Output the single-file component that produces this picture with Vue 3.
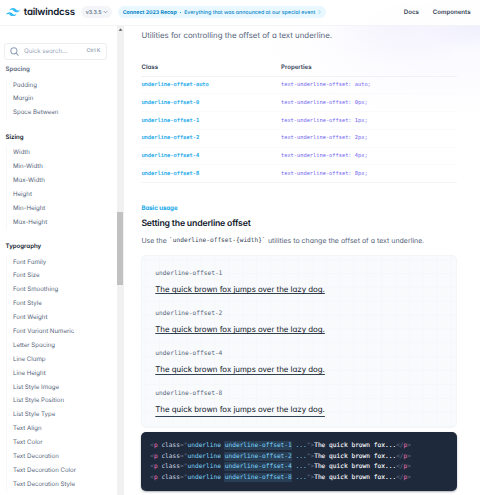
<script setup>
const groups = [
  { title: 'Spacing', soft: true, items: ['Padding', 'Margin', 'Space Between'] },
  { title: 'Sizing', items: ['Width', 'Min-Width', 'Max-Width', 'Height', 'Min-Height', 'Max-Height'] },
  {
    title: 'Typography',
    items: [
      'Font Family', 'Font Size', 'Font Smoothing', 'Font Style', 'Font Weight', 'Font Variant Numeric',
      'Letter Spacing', 'Line Clamp', 'Line Height', 'List Style Image', 'List Style Position',
      'List Style Type', 'Text Align', 'Text Color', 'Text Decoration', 'Text Decoration Color',
      'Text Decoration Style',
    ],
  },
]
const rows = [
  ['auto', 'auto'], ['0', '0px'], ['1', '1px'], ['2', '2px'], ['4', '4px'], ['8', '8px'],
]
const offsets = [1, 2, 4, 8]
</script>

<template>
  <div class="page">
    <header class="topbar">
      <svg class="mark" viewBox="0 0 54 33" aria-hidden="true">
        <path fill="#38bdf8" fill-rule="evenodd" d="M27 0c-7.2 0-11.7 3.6-13.5 10.8 2.7-3.6 5.85-4.95 9.45-4.05 2.054.513 3.522 2.004 5.147 3.653C30.744 13.09 33.808 16.2 40.5 16.2c7.2 0 11.7-3.6 13.5-10.8-2.7 3.6-5.85 4.95-9.45 4.05-2.054-.513-3.522-2.004-5.147-3.653C36.756 3.11 33.692 0 27 0zM13.5 16.2C6.3 16.2 1.8 19.8 0 27c2.7-3.6 5.85-4.95 9.45-4.05 2.054.514 3.522 2.004 5.147 3.653C17.244 29.29 20.308 32.4 27 32.4c7.2 0 11.7-3.6 13.5-10.8-2.7 3.6-5.85 4.95-9.45 4.05-2.054-.513-3.522-2.004-5.147-3.653C23.256 19.31 20.192 16.2 13.5 16.2z" />
      </svg>
      <span class="wordmark">tailwindcss</span>
      <button class="version">
        <span>v3.3.5</span>
        <svg viewBox="0 0 6 4" class="chev"><path d="M1 1l2 2 2-2" fill="none" stroke="#64748b" stroke-width=".8" /></svg>
      </button>
      <a class="banner">
        <strong>Connect 2023 Recap</strong>
        <i class="dot"></i>
        <span class="news">Everything that was announced at our special event</span>
        <svg viewBox="0 0 3 6" class="arrow"><path d="M.5 1l2 2-2 2" fill="none" stroke="#7dd3fc" stroke-width=".7" /></svg>
      </a>
      <nav class="links">
        <a class="docs">Docs</a>
        <a class="comps">Components</a>
      </nav>
    </header>

    <div class="body">
      <aside class="sidebar">
        <div class="search">
          <svg viewBox="0 0 10 10" class="lens">
            <circle cx="4.3" cy="4.3" r="3.4" fill="none" stroke="#94a3b8" stroke-width="1.2" />
            <path d="M6.8 6.8l2.4 2.4" stroke="#94a3b8" stroke-width="1.2" stroke-linecap="round" />
          </svg>
          <span class="placeholder">Quick search...</span>
          <kbd>Ctrl K</kbd>
        </div>
        <section v-for="g in groups" :key="g.title" class="group">
          <h5 :class="{ soft: g.soft }">{{ g.title }}</h5>
          <ul>
            <li v-for="i in g.items" :key="i">{{ i }}</li>
          </ul>
        </section>
      </aside>

      <div class="scrollbar">
        <svg viewBox="0 0 7 8" class="up"><path d="M1.6 4.8L3.5 2.6l1.9 2.2z" fill="#505050" /></svg>
        <div class="thumb"></div>
      </div>

      <main class="content">
        <p class="lead">Utilities for controlling the offset of a text underline.</p>

        <div class="table">
          <div class="tr head"><span>Class</span><span>Properties</span></div>
          <div v-for="r in rows" :key="r[0]" class="tr">
            <code class="cls">underline-offset-{{ r[0] }}</code>
            <code class="prop">text-underline-offset: {{ r[1] }};</code>
          </div>
        </div>

        <p class="eyebrow">Basic usage</p>
        <h3>Setting the underline offset</h3>
        <p class="desc"><span class="use">Use the</span><code>`underline-offset-{width}`</code><span class="rest">utilities to change the offset of a text underline.</span></p>

        <div class="demo">
          <div v-for="o in offsets" :key="o" class="sample">
            <span class="label">underline-offset-{{ o }}</span>
            <p><span :class="'u' + o">The quick brown fox jumps over the lazy dog.</span></p>
          </div>
        </div>

        <div class="code">
          <div v-for="o in offsets" :key="o" class="line"><i>&lt;</i><b>p</b><em> class</em><i>="</i><s>underline </s><mark>underline-offset-{{ o }}</mark><s> ...</s><i>"&gt;</i><strong>The quick brown fox...</strong><i>&lt;/</i><b>p</b><i>&gt;</i></div>
        </div>
      </main>
    </div>
  </div>
</template>

<style>
body {
  overflow: hidden;
  background: #fff;
}
</style>

<style scoped>
* {
  box-sizing: border-box;
  margin: 0;
  padding: 0;
}
.page {
  width: 480px;
  height: 495px;
  overflow: hidden;
  font-family: Inter, "Liberation Sans", sans-serif;
  font-feature-settings: "cv02", "cv03", "cv04", "cv11";
  font-size: 6.1px;
  color: #56657b;
  white-space: nowrap;
  text-rendering: geometricPrecision;
  background:
    radial-gradient(ellipse 60px 36px at 478px 16px, #ececfd, transparent),
    radial-gradient(ellipse 80px 44px at 405px 24px, #f5f2fd, transparent),
    radial-gradient(ellipse 190px 80px at 450px 40px, #f9f9ff, transparent),
    #fff;
}
.topbar {
  height: 26px;
  padding: 0 9.5px 1px 6.2px;
  display: flex;
  align-items: center;
  background: rgba(255, 255, 255, .9);
  border-bottom: 1px solid #f3f4f7;
}
.mark {
  width: 14px;
  height: 8.6px;
  flex: none;
}
.wordmark {
  width: 57px;
  padding-left: 3.6px;
  font-size: 9.7px;
  font-weight: 600;
  letter-spacing: -.22px;
  color: #0f172a;
}
.version {
  width: 31.5px;
  height: 12px;
  margin-left: 3.5px;
  padding: 0 4.2px 0 5px;
  display: flex;
  align-items: center;
  justify-content: space-between;
  border: 0;
  border-radius: 6px;
  background: #f3f5f8;
  font: 600 5.15px Inter, sans-serif;
  color: #64748b;
}
.chev {
  width: 5px;
  height: 4px;
}
.banner {
  width: 208.5px;
  height: 12px;
  margin-left: 5.5px;
  padding: 0 5px;
  display: flex;
  align-items: center;
  border-radius: 6px;
  background: #e9f7ff;
  font-size: 5.25px;
  font-weight: 500;
  line-height: 8px;
  color: #0284c7;
}
.banner span,
.banner strong {
  padding-top: 1px;
}
.banner strong {
  width: 54.5px;
  font-weight: 700;
}
.dot {
  width: 1px;
  height: 1px;
  margin: 0 3.6px 0 2.4px;
  background: #0ea5e9;
}
.arrow {
  width: 3px;
  height: 6px;
  margin-left: auto;
}
.links {
  margin-left: auto;
  display: flex;
  gap: 14px;
  font-weight: 600;
  color: #334155;
}
.body {
  display: flex;
  height: 469px;
}
.sidebar {
  width: 117px;
  padding: 17px 0 0 4px;
  overflow: hidden;
}
.search {
  width: 103px;
  height: 16.5px;
  margin-bottom: 3.5px;
  padding: 0 5.5px 0 4.8px;
  display: flex;
  align-items: center;
  border: 1px solid #eceef2;
  border-radius: 3px;
  color: #94a3b8;
}
.lens {
  width: 9px;
  height: 9px;
}
.placeholder {
  margin-left: 5.2px;
}
kbd {
  margin-left: auto;
  font: 600 5.2px Inter, sans-serif;
}
.group {
  margin: 0 0 10.45px 1.5px;
}
h5 {
  height: 14px;
  margin-bottom: 1.55px;
  font-size: 6.1px;
  line-height: 14px;
  font-weight: 600;
  color: #0f172a;
}
h5.soft {
  color: #56657b;
}
ul {
  list-style: none;
  border-left: 1px solid #f7f8fa;
}
li {
  height: 13.9px;
  padding-left: 6.5px;
  line-height: 13.9px;
}
.scrollbar {
  width: 7px;
  background: #f1f1f1;
}
.up {
  display: block;
  width: 7px;
  height: 8px;
}
.thumb {
  width: 6px;
  height: 73.5px;
  margin-top: 177.5px;
  margin-left: .3px;
  background: #c1c1c1;
}
.content {
  flex: 1;
  padding: 0 23px 0 17.4px;
}
code, .label, .code {
  font-family: "DejaVu Sans Mono", "Liberation Mono", monospace;
}
.lead {
  height: 35.5px;
  padding-top: 2.6px;
  font-size: 7.85px;
  line-height: 13px;
}
.tr {
  height: 17.7px;
  display: grid;
  grid-template-columns: 139.6px 1fr;
  align-items: center;
  border-bottom: 1px solid #f9fafb;
}
.head {
  height: 15.3px;
  padding-bottom: 1.8px;
  border-color: #f0f2f5;
  font-weight: 600;
  color: #334155;
}
.tr:last-child {
  border-color: #f3f5f8;
}
.tr code {
  font-size: 5.33px;
}
.cls {
  color: #0ea5e9;
  -webkit-text-stroke: .15px #0ea5e9;
}
.prop {
  color: #6d5ff0;
}
.eyebrow {
  height: 10px;
  margin-top: 21px;
  line-height: 10px;
  font-weight: 600;
  color: #0ea5e9;
  -webkit-text-stroke: .1px #0ea5e9;
}
h3 {
  height: 14px;
  margin-top: 3.5px;
  font-size: 8.72px;
  line-height: 14px;
  font-weight: 600;
  letter-spacing: -.19px;
  color: #0f172a;
}
.desc {
  height: 12px;
  margin-top: 3px;
  display: flex;
  align-items: center;
  font-size: 6.98px;
}
.use {
  width: 27.7px;
}
.desc code {
  width: 98.8px;
  padding-top: .8px;
  font-size: 6.18px;
  color: #334155;
}
.rest {
  letter-spacing: .015px;
}
.demo {
  height: 173.5px;
  margin-top: 8.3px;
  padding: 12.4px 12.9px;
  border: 1px solid #f3f6f8;
  border-radius: 5px;
  background:
    linear-gradient(90deg, #f5f7fa 1px, transparent 1px) 3px 0 / 13.9px 13.9px,
    linear-gradient(#f5f7fa 1px, transparent 1px) 0 3px / 13.9px 13.9px,
    #f9fafc;
}
.sample {
  height: 40px;
}
.label {
  display: block;
  height: 12px;
  font-size: 6.2px;
  line-height: 12px;
}
.sample p {
  margin-top: 2.1px;
  font-size: 7.87px;
  line-height: 14px;
  color: #0f172a;
}
.sample p span {
  text-decoration: underline;
  text-decoration-color: #334155;
  text-decoration-thickness: 1px;
  text-decoration-skip-ink: none;
}
.u1 { text-underline-offset: .5px; }
.u2 { text-underline-offset: .9px; }
.u4 { text-underline-offset: 1.8px; }
.u8 { text-underline-offset: 3.5px; }
.code {
  height: 59.2px;
  margin-top: 3.7px;
  padding: 9.4px 8.8px;
  border-radius: 5px;
  background: #1e293b;
  box-shadow: 0 1px 2px rgba(15, 23, 42, .35);
  font-size: 6.2px;
  line-height: 10.45px;
  color: #e2e8f0;
}
.line {
  height: 10.45px;
  white-space: pre;
}
.line i { font-style: normal; color: #64748b; }
.line b { font-weight: 400; color: #f472b6; }
.line em { font-style: normal; color: #cbd5e1; }
.line s { text-decoration: none; color: #7dd3fc; }
.line strong { font-weight: 400; color: #f8fafc; -webkit-text-stroke: .1px #f8fafc; }
.line mark {
  padding: 1px .5px;
  margin: 0 -.5px;
  border-radius: 1px;
  background: #283f55;
  color: #7dd3fc;
}
</style>
